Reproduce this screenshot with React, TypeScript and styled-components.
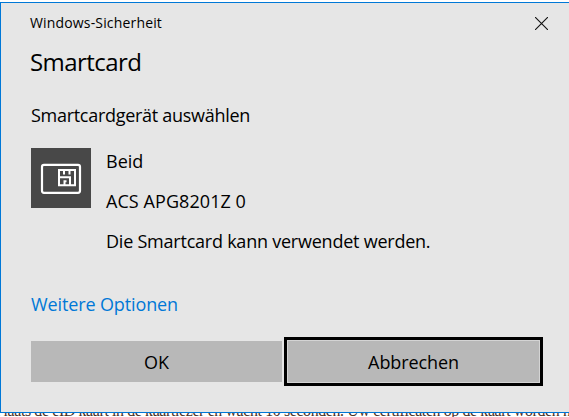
import React from "react";
import styled, { createGlobalStyle } from "styled-components";

const Global = createGlobalStyle`
  * { box-sizing: border-box; }
  body { margin: 0; background: #fff; overflow: hidden; }
`;
const Screen = styled.div`
  width: 569px; height: 417px; padding-top: 2px; overflow: hidden;
  display: flex; flex-direction: column;
  font-family: "Open Sans", "Noto Sans", sans-serif; color: #000;
`;
const Dialog = styled.main`
  height: 411px; flex: none; background: #e6e6e6;
  border: 1px solid #0078d7; border-right: 0;
  padding: 0 26px 0 30px; display: flex; flex-direction: column;
`;
const Line = styled.div<{ $size: number; $h: number; $ls?: number; $gap?: number; $nudge?: number }>`
  font-size: ${p => p.$size}px; height: ${p => p.$h}px; line-height: ${p => p.$h}px;
  letter-spacing: ${p => p.$ls ?? 0}px; margin-top: ${p => p.$gap ?? 0}px;
  margin-left: ${p => p.$nudge ?? 0}px;
  white-space: nowrap; width: max-content; flex: none;
`;
const TitleBar = styled.header`
  display: flex; justify-content: space-between; height: 40px; margin-right: -7px;
`;
const Close = styled.button`
  border: 0; padding: 0; background: none; width: 13px; height: 13px;
  margin: 14px 2px 0 0; display: flex;
`;
const Device = styled.section`
  display: flex; gap: 15px; margin-top: 20px; height: 110px; flex: none;
`;
const Tile = styled.div`
  width: 60px; height: 60px; background: #484848; flex: none;
`;
const Link = styled.a`color: #0078d7;`;
const Buttons = styled.footer`
  display: grid; grid-template-columns: 251px 259px; gap: 2px; align-items: center;
  height: 49px; margin-top: 20px; flex: none;
`;
const Button = styled.button<{ $focused?: boolean }>`
  font: inherit; color: #000; background: #b8b8b8; border: 0; border-radius: 0; padding: 0;
  height: ${p => (p.$focused ? 49 : 41)}px; display: flex; justify-content: center; align-items: center;
  ${p => p.$focused && "border: 3px solid #000; box-shadow: inset 0 0 0 1px #d4d4d4;"}
`;
const Behind = styled.div`
  height: 4px; flex: none; overflow: hidden; color: #4a3028;
  display: flex; align-items: flex-end;
`;
const BehindText = styled.div`
  font-family: "Liberation Serif", serif; font-size: 15.9px; line-height: 14px; height: 13px;
  letter-spacing: -0.37px; white-space: nowrap; margin-left: -5px; flex: none;
`;

export default function App() {
  return (
    <Screen>
      <Global />
      <Dialog>
        <TitleBar>
          <Line $size={14} $h={20} $gap={10} $ls={0.16} $nudge={-1}>Windows-Sicherheit</Line>
          <Close aria-label="Schließen">
            <svg width="13" height="13" viewBox="0 0 13 13" stroke="#111" strokeWidth="1.1">
              <path d="M0 0L13 13M13 0L0 13" />
            </svg>
          </Close>
        </TitleBar>
        <Line $size={24} $h={36} $gap={1} $ls={-0.55} $nudge={-1}>Smartcard</Line>
        <Line $size={18} $h={26} $gap={22} $ls={-0.29}>Smartcardgerät auswählen</Line>
        <Device>
          <Tile>
            <svg width="60" height="60" fill="none" stroke="#fff" strokeWidth="2.2">
              <rect x="11" y="16.8" width="38" height="28" rx="2" />
              <path d="M28 22H44V37.3H28ZM33 22V26.5M38.5 22V26.5M28 29.2H39V37M33.5 37V33.2H35.5" strokeWidth="2" />
            </svg>
          </Tile>
          <div>
            <Line $size={18} $h={26}>Beid</Line>
            <Line $size={18} $h={26} $gap={14} $ls={0.07}>ACS APG8201Z 0</Line>
            <Line $size={18} $h={26} $gap={14} $ls={-0.23}>Die Smartcard kann verwendet werden.</Line>
          </div>
        </Device>
        <Line $size={18} $h={26} $gap={33} $ls={-0.12}><Link>Weitere Optionen</Link></Line>
        <Buttons>
          <Button><Line $size={18} $h={26}>OK</Line></Button>
          <Button $focused><Line $size={18} $h={26} $ls={-0.1}>Abbrechen</Line></Button>
        </Buttons>
      </Dialog>
      <Behind><BehindText>Plaats de eID kaart in de kaartlezer en wacht 10 seconden. Uw certificaten op de kaart worden nu</BehindText></Behind>
    </Screen>
  );
}
